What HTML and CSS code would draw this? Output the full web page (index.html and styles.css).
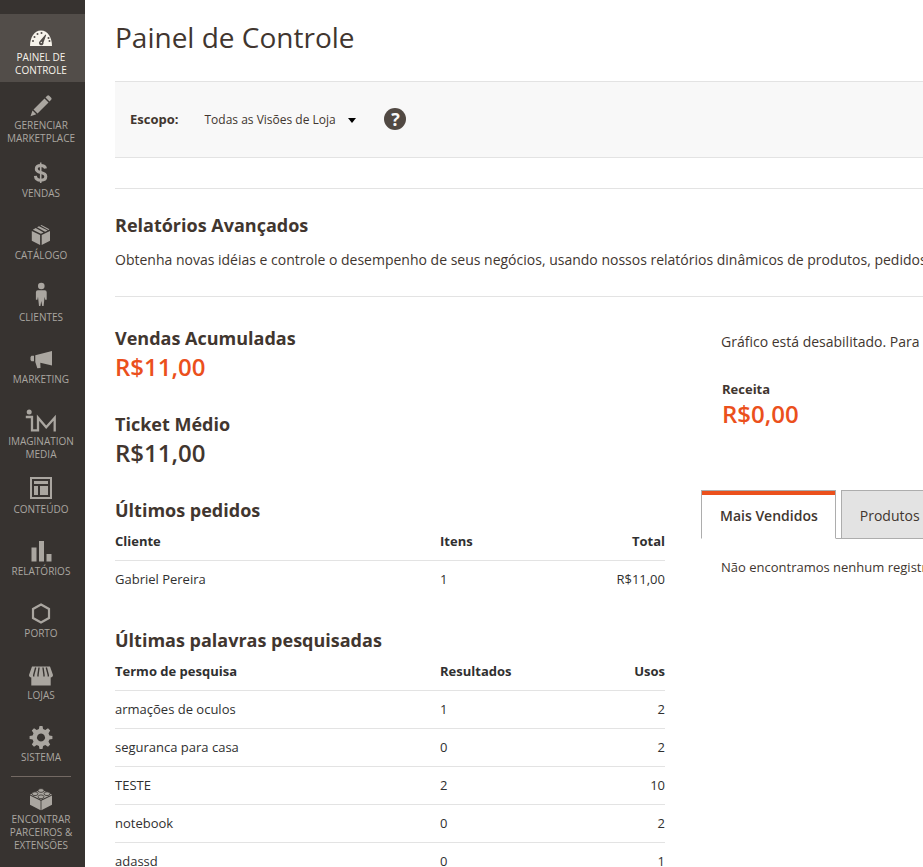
FILE: index.html
```html
<!DOCTYPE html>
<html lang="pt-BR">
<head>
<meta charset="utf-8">
<meta name="viewport" content="width=device-width, initial-scale=1">
<title>Painel de Controle</title>
<link rel="stylesheet" href="styles.css">
</head>
<body>
<div class="app">
  <nav class="sidebar" aria-label="Menu principal">
    <ul class="menu">
      <li><a class="menu-link active" href="#" aria-current="page">
        <svg class="icon" viewBox="0 -1 32 32"><path fill="currentColor" d="M5 24c0-8 4-15.500 11-15.500S27 16 27 24z"/><g fill="#524d49"><circle cx="8" cy="19" r="1"/><circle cx="9.500" cy="15" r="1"/><circle cx="12.500" cy="12" r="1"/><circle cx="16.500" cy="11" r="1"/><circle cx="23.500" cy="16" r="1"/><circle cx="24.500" cy="19" r="1"/><path d="M20.500 12.500l.7.500-2.700 7.500a2.300 2.300 0 1 1-4-1z"/></g><circle cx="16.300" cy="20.500" r=".7" fill="currentColor"/></svg>
        <span>Painel de Controle</span></a></li>
      <li><a class="menu-link" href="#">
        <svg class="icon" viewBox="0 -1 32 32"><path fill="currentColor" d="M8.500 19.500L19.500 8.500l4 4L12.500 23.500zM7.500 20.500l3.800 3.800L5.500 26.300zM20.500 7.500l1.700-1.700q1-.9 2 0l2 2q.9 1 0 2l-1.700 1.700z"/></svg>
        <span>Gerenciar Marketplace</span></a></li>
      <li><a class="menu-link" href="#">
        <svg class="icon" viewBox="0 0 32 32"><path fill="none" stroke="currentColor" stroke-width="3" d="M20.500 11.500C20 9 18 8.600 15.800 8.600c-3 0-4.500 1.300-4.500 3.300 0 2.500 2 3 4.500 3.600 3 .7 5 1.400 5 4 0 2.300-1.800 3.700-5 3.700-3.300 0-5.200-1.500-5.400-4.400"/><path stroke="currentColor" stroke-width="1.600" d="M15.700 5.500v20.500"/></svg>
        <span>Vendas</span></a></li>
      <li><a class="menu-link" href="#">
        <svg class="icon" viewBox="0 0 32 32"><path fill="currentColor" d="M6.800 12l8.300 4v10L6.800 21.800zM25 12l-8.300 4v10l8.300-4.200zM7.800 10.700l2.900-1.600 7.900 4.300-2.700 1.400zM12 8.300l2-1.100 8.700 4.300-2.600 1.300zM15.400 6.400l1-.5 8 4.300-1 .7z"/></svg>
        <span>Catálogo</span></a></li>
      <li><a class="menu-link" href="#">
        <svg class="icon" viewBox="0 1 32 32"><circle cx="16.300" cy="6" r="3.300" fill="currentColor"/><path fill="currentColor" d="M12.800 10.200h7q1.900 0 1.900 2v7.500h-1.500l-.6-3-1 9.400h-1.400l-.9-5-.9 5H14l-1-9.400-.6 3h-1.500v-7.500q0-2 1.900-2z"/></svg>
        <span>Clientes</span></a></li>
      <li><a class="menu-link" href="#">
        <svg class="icon" viewBox="0 0 32 32"><path fill="currentColor" d="M5.500 14l1-1.300H9v5.600H6.500l-1-1.300zM10.300 12.300L27 8v14.500l-11.700-2.700.2 5.200-3.200.3-2-6.300z"/></svg>
        <span>Marketing</span></a></li>
      <li><a class="menu-link" href="#">
        <svg class="icon" viewBox="0 0 32 32"><circle cx="4.200" cy="7" r="2.500" fill="currentColor"/><path fill="none" stroke="currentColor" stroke-width="2.300" d="M.8 12H7v13.300h6V12.700l8.200 9.600L29.700 12.700v13.800"/></svg>
        <span>Imagination Media</span></a></li>
      <li><a class="menu-link" href="#">
        <svg class="icon" viewBox="0 1 32 32"><path fill="none" stroke="currentColor" stroke-width="2" d="M6 6h20v20H6z"/><path fill="currentColor" d="M9 9h14v3H9zM9 14h4v9H9zM15 14h8v9h-8z"/></svg>
        <span>Conteúdo</span></a></li>
      <li><a class="menu-link" href="#">
        <svg class="icon" viewBox="0 0 32 32"><path fill="currentColor" d="M6.500 12.500h5v14h-5zM14 6h5v20.500h-5zM21.500 19h5v7.500h-5z"/></svg>
        <span>Relatórios</span></a></li>
      <li><a class="menu-link" href="#">
        <svg class="icon" viewBox="0 0 32 32"><path fill="none" stroke="currentColor" stroke-width="2.200" d="M16 7.500l8 4.500v9l-8 4.500-8-4.500v-9z"/></svg>
        <span>Porto</span></a></li>
      <li><a class="menu-link" href="#">
        <svg class="icon" viewBox="0 0 32 32"><path fill="currentColor" d="M7 7.500h18l3 8.500c0 1.500-1 2.500-2.300 2.500V26.500H6.300v-8C5 18.500 4 17.500 4 16z"/><path stroke="#373330" stroke-width="1.400" fill="none" d="M10.700 8.500L8.700 16v1.500M14 8.500L13 16v1.500M18 8.500l1 7.500v1.500M21.300 8.500l2 7.500v1.500"/></svg>
        <span>Lojas</span></a></li>
      <li><a class="menu-link" href="#">
        <svg class="icon" viewBox="0 0 32 32"><path fill="currentColor" fill-rule="evenodd" d="M14.500 5h3l.6 3.100 2.200.9 2.700-1.700 2.200 2.200-1.700 2.700.9 2.200 3 .6v3l-3 .6-.9 2.200 1.700 2.700-2.200 2.200-2.700-1.700-2.200.9-.6 3.100h-3l-.6-3.100-2.200-.9L9 25.700l-2.200-2.200 1.700-2.700-.9-2.200-3-.6v-3l3-.6.9-2.200-1.700-2.700L9 7.300 11.700 9l2.200-.9zM16 12.500a4 4 0 1 0 .01 0z"/></svg>
        <span>Sistema</span></a></li>
      <li class="separated"><a class="menu-link" href="#">
        <svg class="icon" viewBox="0 0 32 32"><path fill="currentColor" d="M5 11.500l11-5 11 5-11 5.300zM5 12.500l10.600 5.200v9.500L5 21.700zM27 12.500l-10.600 5.200v9.500L27 21.700z"/><g fill="currentColor" stroke="#373330" stroke-width=".8"><ellipse cx="16" cy="7.500" rx="3" ry="1.900"/><ellipse cx="10" cy="10.700" rx="3" ry="1.900"/><ellipse cx="22" cy="10.700" rx="3" ry="1.900"/><ellipse cx="16" cy="13.800" rx="3" ry="1.900"/></g></svg>
        <span>Encontrar Parceiros &amp; Extensões</span></a></li>
    </ul>
  </nav>

  <main class="page">
    <h1>Painel de Controle</h1>
    <div class="scope">
      <label class="scope-label" for="store-view">Escopo:</label>
      <div class="scope-select">
        <select id="store-view"><option>Todas as Visões de Loja</option></select>
        <svg class="caret" viewBox="0 0 8 5"><path d="M0 0h8L4 5z"/></svg>
      </div>
      <a class="help" href="#" aria-label="Ajuda">?</a>
    </div>

    <section class="advanced">
      <h2>Relatórios Avançados</h2>
      <p>Obtenha novas idéias e controle o desempenho de seus negócios, usando nossos relatórios dinâmicos de produtos, pedidos e clientes.</p>
    </section>

    <div class="dashboard">
      <div class="summary">
        <section class="block">
          <h2>Vendas Acumuladas</h2>
          <strong class="price accent">R$11,00</strong>
        </section>
        <section class="block">
          <h2>Ticket Médio</h2>
          <strong class="price">R$11,00</strong>
        </section>
        <section class="block">
          <h2>Últimos pedidos</h2>
          <table>
            <thead><tr><th>Cliente</th><th>Itens</th><th>Total</th></tr></thead>
            <tbody><tr><td>Gabriel Pereira</td><td>1</td><td>R$11,00</td></tr></tbody>
          </table>
        </section>
        <section class="block">
          <h2>Últimas palavras pesquisadas</h2>
          <table>
            <thead><tr><th>Termo de pesquisa</th><th>Resultados</th><th>Usos</th></tr></thead>
            <tbody>
              <tr><td>armações de oculos</td><td>1</td><td>2</td></tr>
              <tr><td>seguranca para casa</td><td>0</td><td>2</td></tr>
              <tr><td>TESTE</td><td>2</td><td>10</td></tr>
              <tr><td>notebook</td><td>0</td><td>2</td></tr>
              <tr><td>adassd</td><td>0</td><td>1</td></tr>
            </tbody>
          </table>
        </section>
      </div>

      <div class="details">
        <p class="notice">Gráfico está desabilitado. Para ativar o gráfico, clique aqui.</p>
        <div class="total">
          <span class="total-label">Receita</span>
          <strong class="price accent">R$0,00</strong>
        </div>
        <div class="tabs" role="tablist">
          <button class="tab selected" type="button" role="tab" aria-selected="true">Mais Vendidos</button>
          <button class="tab" type="button" role="tab" aria-selected="false">Produtos Mais Vistos</button>
        </div>
        <p class="empty">Não encontramos nenhum registro.</p>
      </div>
    </div>
  </main>
</div>
</body>
</html>
```
FILE: styles.css
```css
* {
  box-sizing: border-box;
}

body {
  margin: 0;
  background: #fff;
  color: #41362f;
  font: 14px/20px "Open Sans", sans-serif;
}

h1, h2, p, ul {
  margin: 0;
  padding: 0;
}

.app {
  display: flex;
  height: 100vh;
  overflow: hidden;
}

/* Sidebar */
.sidebar {
  flex: none;
  width: 85px;
  padding-top: 14px;
  background: #373330;
}

.menu {
  list-style: none;
}

.menu-link {
  display: flex;
  flex-direction: column;
  align-items: center;
  min-height: 62px;
  padding: 7px 7px 5px 4px;
  color: #aaa6a0;
  font-size: 10px;
  line-height: 13px;
  text-align: center;
  text-decoration: none;
  text-transform: uppercase;
}

.menu-link.active {
  background: #524d49;
  color: #f7f3eb;
}

.icon {
  flex: none;
  width: 32px;
  height: 32px;
  margin-bottom: -2px;
}

.separated::before {
  content: "";
  display: block;
  height: 1px;
  margin: 0 14px -1px 11px;
  background: #736963;
}

/* Page */
.page {
  flex: 1;
  min-width: 0;
  padding: 17px 0 0 30px;
  overflow: hidden;
}

h1 {
  margin-bottom: 24px;
  font-size: 28px;
  font-weight: 400;
  line-height: 40px;
}

h2 {
  font-size: 18px;
  font-weight: 700;
  line-height: 24px;
}

.scope {
  display: flex;
  align-items: center;
  height: 77px;
  margin-bottom: 30px;
  padding: 0 15px 1px;
  border: solid #e3e3e3;
  border-width: 1px 0;
  background: #f8f8f8;
  font-size: 13px;
}

.scope-label {
  margin-right: 26px;
  font-weight: 700;
}

.scope-select {
  display: flex;
  align-items: center;
  margin-right: 28px;
}

.scope-select select {
  appearance: none;
  padding: 2px 21px 0 0;
  border: 0;
  background: transparent;
  color: inherit;
  font: inherit;
  font-size: 12px;
}

.caret {
  width: 8px;
  height: 5px;
  margin: 2px 0 0 -9px;
  pointer-events: none;
}

.help {
  width: 22px;
  height: 22px;
  border-radius: 50%;
  background: #514943;
  color: #f8f8f8;
  font-size: 18px;
  font-weight: 700;
  line-height: 22px;
  text-align: center;
  text-decoration: none;
}

.advanced {
  height: 109px;
  padding-top: 24px;
  border: solid #e3e3e3;
  border-width: 1px 0;
  white-space: nowrap;
}

.advanced p {
  margin-top: 13px;
}

.dashboard {
  display: grid;
  grid-template-columns: 550px minmax(0, 1fr);
  column-gap: 36px;
  padding-top: 29px;
}

.block {
  margin-bottom: 28px;
}

.price {
  display: block;
  font-size: 24px;
  font-weight: 600;
  line-height: 34px;
}

.accent {
  color: #eb501c;
}

table {
  width: 100%;
  margin-bottom: 30px;
  border-collapse: collapse;
  table-layout: fixed;
  color: #303030;
  font-size: 13px;
  line-height: 19px;
}

th, td {
  height: 38px;
  padding: 0;
  text-align: left;
}

th {
  padding-top: 1px;
}

th:first-child {
  width: 325px;
}

th:last-child, td:last-child {
  text-align: right;
}

tbody tr {
  border-top: 1px solid #e3e3e3;
}

.details {
  overflow: hidden;
  white-space: nowrap;
}

.notice {
  margin: 6px 0 27px 20px;
}

.total {
  margin: 0 0 61px 21px;
}

.total-label {
  font-size: 13px;
  font-weight: 700;
}

.total .price {
  line-height: 30px;
}

.tabs {
  display: flex;
  background: linear-gradient(#adadad, #adadad) bottom / 100% 1px no-repeat;
}

.tab {
  flex: none;
  height: 49px;
  padding: 2px 18px 0;
  border: 1px solid #adadad;
  background: #e3e3e3;
  color: #41362f;
  font: 14px/20px "Open Sans", sans-serif;
}

.tab.selected {
  margin-right: 5px;
  padding-right: 17px;
  border-bottom-color: #fff;
  background: linear-gradient(#eb501c 4px, #fff 4px);
  font-weight: 600;
}

.empty {
  margin: 18px 0 0 20px;
  font-size: 13px;
}
```
